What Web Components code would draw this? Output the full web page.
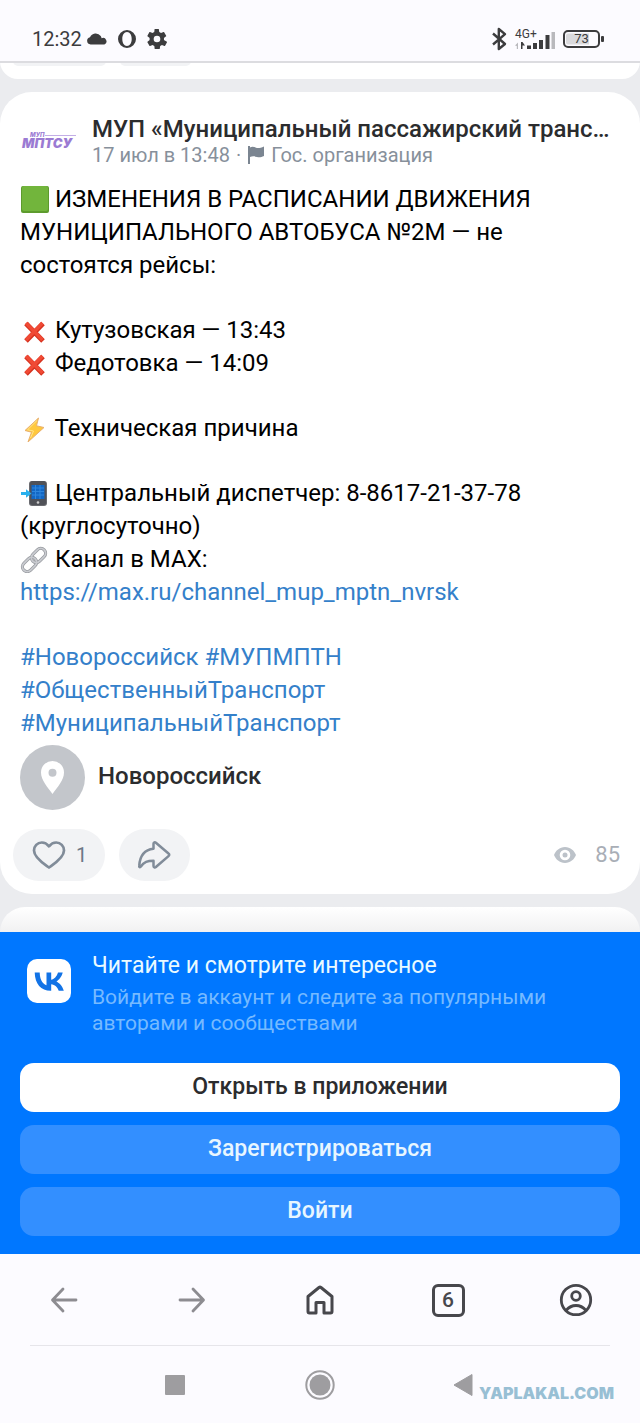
<!DOCTYPE html>
<html lang="ru">
<head>
<meta charset="utf-8">
<meta name="viewport" content="width=device-width, initial-scale=1">
<title>Запись сообщества</title>
<style>
  html { background: #fcfbff; }
  body { margin: 0; font-family: Roboto, "Noto Sans", sans-serif; color: #000; }
</style>
</head>
<body>
<phone-screen>
  <status-bar slot="top"></status-bar>
  <post-feed>
    <post-card>
      <span slot="author">МУП «Муниципальный пассажирский транс…</span>
      <span slot="date">17 июл в 13:48</span>
      <span slot="kind">Гос. организация</span>
    </post-card>
  </post-feed>
  <login-banner></login-banner>
  <browser-bar></browser-bar>
  <system-bar></system-bar>
</phone-screen>

<script>
const define = (name, html) => {
  const template = document.createElement('template');
  template.innerHTML = html;
  customElements.define(name, class extends HTMLElement {
    constructor() {
      super();
      this.attachShadow({ mode: 'open' }).append(template.content.cloneNode(true));
    }
  });
};

define('phone-screen', `
<style>
  :host { display: flex; flex-direction: column; background: #fcfbff; }
</style>
<slot name="top"></slot><slot></slot>`);

define('status-bar', `
<style>
  :host { display: flex; align-items: flex-end; justify-content: space-between; height: 61px;
    padding: 0 36px 0 32px; box-sizing: border-box; background: #fcfbff; color: #3c3c3e;
    box-shadow: 0 2px 0 #dcdce0; position: relative; z-index: 1; }
  .side { display: flex; align-items: center; height: 20px; margin-bottom: 12px; }
  .left { gap: 10px; }
  .left time { font-size: 20px; line-height: 20px; margin-right: -5px; }
  .right { gap: 8px; }
  .net { position: relative; display: block; width: 40px; height: 22px; }
  .net span { position: absolute; left: 0; top: 0; font-size: 12px; line-height: 12px; }
  .bat { position: relative; width: 41px; height: 20px; }
  .bat span { position: absolute; left: 0; top: 0; width: 37px; text-align: center; font-size: 13px; line-height: 20px; }
  svg { display: block; }
</style>
<div class="side left">
  <time>12:32</time>
  <svg width="20" height="20" viewBox="0 0 20 20"><path fill="#3c3c3e" d="M3.6 15.500a3.700 3.700 0 0 1-.6-7.300A6.200 6.200 0 0 1 13.700 7c.4.7.7 1.300.9 2.200a3.200 3.200 0 0 1 2.800 6.300z"/></svg>
  <svg width="20" height="20" viewBox="0 0 20 20"><path fill="#3c3c3e" fill-rule="evenodd" d="M10 1a9 9 0 1 0 0 18 9 9 0 0 0 0-18zm0 2c2.900 0 4.700 3.200 4.700 7s-1.800 7-4.700 7-4.700-3.200-4.700-7S7.100 3 10 3z"/></svg>
  <svg width="20" height="20" viewBox="0 0 24 24"><path fill="#3c3c3e" d="M20.300 13.200c.1-.4.1-.8.1-1.200s0-.8-.1-1.200l2.600-2c.2-.2.300-.5.100-.8l-2.400-4.200c-.2-.3-.5-.4-.8-.3l-3 1.200c-.6-.5-1.300-.9-2.100-1.200l-.5-3.200c0-.3-.3-.5-.6-.5H9.700c-.3 0-.6.2-.6.5l-.4 3.200c-.8.3-1.500.7-2.100 1.200l-3-1.200c-.3-.1-.6 0-.8.3L.500 8c-.2.300-.1.600.1.800l2.600 2c-.1.400-.1.800-.1 1.200s0 .8.100 1.200l-2.600 2c-.2.200-.3.500-.1.800l2.400 4.200c.2.300.5.400.8.300l3-1.200c.6.500 1.300.9 2.100 1.200l.4 3.200c0 .3.300.5.600.5h4.900c.3 0 .6-.2.600-.5l.5-3.200c.8-.3 1.500-.7 2.100-1.200l3 1.200c.3.100.6 0 .8-.3L24 16c.2-.3.100-.6-.1-.8zM12 16a4 4 0 1 1 0-8 4 4 0 0 1 0 8z"/></svg>
</div>
<div class="side right">
  <svg width="16" height="24" viewBox="0 0 16 24"><path d="M2 6.500 14 17l-6.200 5V2L14 7.200 2 17.500" fill="none" stroke="#3c3c3e" stroke-width="2.400" stroke-linejoin="round"/></svg>
  <div class="net"><span>4G+</span>
    <svg width="40" height="22" viewBox="0 0 40 22"><g fill="#3c3c3e"><path d="M12 17.500h4V21h-4zM18 15h4v6h-4zM24 12h4v9h-4zM30.500 7h4v14h-4z"/><path d="M6 14h1.500l2.500 3.500H7.500V21H6z"/></g><path fill="#b9b9bd" d="M36.500 4h3.500v17h-3.500zM0 17.500l3-3V21H1.800v-3z"/></svg>
  </div>
  <div class="bat">
    <svg width="41" height="20" viewBox="0 0 41 20"><rect x="1" y="2" width="35" height="16" rx="4" fill="#fcfbff" stroke="#3c3c3e" stroke-width="2"/><path d="M5 4.500h21v11H5a2 2 0 0 1-2-2v-7a2 2 0 0 1 2-2z" fill="#dadadd"/><rect x="38" y="7" width="3" height="6" rx="1" fill="#3c3c3e"/></svg>
    <span>73</span>
  </div>
</div>`);

define('post-feed', `
<style>
  :host { display: flex; flex-direction: column; gap: 13px; background: #ebecef; overflow: hidden; }
  .prev, .next { background: #fff; }
  .prev { height: 18px; border-radius: 0 0 32px 32px; display: flex; gap: 14px; padding-left: 13px; }
  .prev i { height: 5px; width: 93px; border-radius: 0 0 26px 26px; background: #f2f3f5; }
  .prev i + i { width: 71px; }
  .next { height: 25px; border-radius: 32px 32px 0 0; background: linear-gradient(#fff, #f1f1f2); }
</style>
<div class="prev"><i></i><i></i></div>
<slot></slot>
<div class="next"></div>`);

define('emoji-icon', `
<style>
  :host { display: inline-block; width: 29px; height: 28px; vertical-align: -6px; }
  svg { display: none; }
  :host([kind=square]) .square, :host([kind=cross]) .cross, :host([kind=bolt]) .bolt,
  :host([kind=phone]) .phone, :host([kind=link]) .link { display: block; }
</style>
<svg class="square" width="29" height="28" viewBox="0 0 29 28"><rect x="1" y="1" width="28" height="27" rx="2" fill="#5d9b2d"/><rect x="2" y="1" width="26" height="25" rx="2" fill="#72b53c"/></svg>
<svg class="cross" width="28" height="28" viewBox="0 0 28 28"><path d="M6 7.500 23 25M23 7.500 6 25" stroke="#d6321f" stroke-width="5"/><path d="M6 7 22.500 24M22.500 7 6 24" stroke="#f04a35" stroke-width="3.500"/></svg>
<svg class="bolt" width="28" height="28" viewBox="0 0 28 28"><path d="M18.500 4 5 16.500l6.500 1.700L8 28l16-14.500-7.500-1.700z" fill="#ffc83d" stroke="#e8b070" stroke-width="1" stroke-linejoin="round"/><path d="m17 6.500-9.500 9.300 6 1.200-3 7" fill="none" stroke="#ffe48c" stroke-width="1"/></svg>
<svg class="phone" width="28" height="28" viewBox="0 0 28 28"><rect x="9" y="2" width="18" height="25" rx="3" fill="#6a6b70"/><rect x="10" y="2" width="16" height="24" rx="2.500" fill="#505258"/><path d="M11.500 6h13v14h-13z" fill="#1267c4"/><path d="M12 9h12M12 12.500h12M12 16h12M15.500 6v14M20 6v14" stroke="#2f86dc" stroke-width="1"/><circle cx="18" cy="23.500" r="1.300" fill="#ccc"/><path d="M1 13h5v-2.800l5.500 4.300L6 18.800V16H1z" fill="#28b0ed"/></svg>
<svg class="link" width="28" height="28" viewBox="0 0 28 28"><g fill="none"><g stroke="#96999e" stroke-width="3.200"><rect x="-8" y="-4.800" width="16" height="9.600" rx="4.800" transform="translate(9.500 19.500) rotate(-45)"/><rect x="-8" y="-4.800" width="16" height="9.600" rx="4.800" transform="translate(18.500 10.500) rotate(-45)"/></g><g stroke="#c9cbd0" stroke-width="1.800"><rect x="-8" y="-4.800" width="16" height="9.600" rx="4.800" transform="translate(9.500 19.500) rotate(-45)"/><rect x="-8" y="-4.800" width="16" height="9.600" rx="4.800" transform="translate(18.500 10.500) rotate(-45)"/></g></g></svg>`);

define('post-card', `
<style>
  :host { display: block; background: #fff; border-radius: 32px; padding: 23px 20px 13px; }
  svg { display: block; }
  header { display: flex; gap: 14px; align-items: center; height: 52px; }
  .avatar { flex: none; width: 58px; font-family: Inter, sans-serif; font-style: italic; }
  .who { min-width: 0; flex: 1; }
  h2 { margin: 0; font-size: 24px; line-height: 28px; font-weight: 500; color: #2b2c2e;
    white-space: nowrap; overflow: hidden; text-overflow: ellipsis; }
  .meta { display: flex; align-items: center; gap: 6px; font-size: 20px; line-height: 24px; color: #87909b; }
  .text { padding-top: 16px; display: flex; flex-direction: column; gap: 32px; font-size: 24px; line-height: 33px; }
  p { margin: 0; }
  a { color: #3480ca; text-decoration: none; }
  .place { display: flex; align-items: center; gap: 13px; margin-top: 5px; font-size: 24px; line-height: 28px; font-weight: 500; color: #2b2c2e; }
  .place span { padding-bottom: 4px; }
  footer { display: flex; align-items: center; gap: 14px; margin: 19px 0 0 -7px; }
  button { display: flex; align-items: center; justify-content: center; gap: 9px; height: 52px; padding: 0 18px;
    border: 0; border-radius: 26px; background: #f2f3f5; color: #6d7885; font: 400 20px/24px Roboto, sans-serif; }
  .views { margin-left: auto; display: flex; align-items: center; gap: 18px; font-size: 22px; line-height: 28px; color: #a9aeb6; }
</style>
<header>
  <svg class="avatar" width="58" height="58" viewBox="0 0 58 58"><text x="2" y="36" font-size="13" font-weight="900" fill="#9b7bd3">МПТСУ</text><text x="10" y="25" font-size="6" font-weight="800" fill="#9b7bd3">МУП</text><path d="M25 23.500h31" stroke="#c3aee6"/></svg>
  <div class="who">
    <h2><slot name="author"></slot></h2>
    <div class="meta"><slot name="date"></slot><span>·</span>
      <svg width="18" height="20" viewBox="0 0 18 20"><path fill="#7b8591" d="M1 1h2v1.500c3-2 5.500.5 8 .5 2 0 3.500-.5 6-1.500v9.500c-3 1.500-5 1.500-7 1-2.500-.7-4.500-1-7 0v7H1z"/></svg>
      <slot name="kind"></slot></div>
  </div>
</header>
<div class="text">
  <p><emoji-icon kind="square"></emoji-icon> ИЗМЕНЕНИЯ В РАСПИСАНИИ ДВИЖЕНИЯ МУНИЦИПАЛЬНОГО АВТОБУСА №2М — не состоятся рейсы:</p>
  <p><emoji-icon kind="cross"></emoji-icon> Кутузовская — 13:43<br><emoji-icon kind="cross"></emoji-icon> Федотовка — 14:09</p>
  <p><emoji-icon kind="bolt"></emoji-icon> Техническая причина</p>
  <p><emoji-icon kind="phone"></emoji-icon> Центральный диспетчер: 8-8617-21-37-78 (круглосуточно)<br><emoji-icon kind="link"></emoji-icon> Канал в MAX:<br><a href="#max">https://max.ru/channel_mup_mptn_nvrsk</a></p>
  <p><a href="#n">#Новороссийск</a> <a href="#m">#МУПМПТН</a><br><a href="#o">#ОбщественныйТранспорт</a><br><a href="#t">#МуниципальныйТранспорт</a></p>
</div>
<div class="place">
  <svg width="65" height="65" viewBox="0 0 65 65"><circle cx="32.500" cy="32.500" r="32.500" fill="#c3c6cb"/><path fill="#fff" fill-rule="evenodd" d="M32.500 16A11.500 11.500 0 0 0 21 27.500c0 8 7 15 11.500 21.500C37 42.500 44 35.500 44 27.500A11.500 11.500 0 0 0 32.500 16zm0 7.700a4 4 0 1 1 0 8 4 4 0 0 1 0-8z"/></svg>
  <span>Новороссийск</span>
</div>
<footer>
  <button aria-label="Нравится"><svg width="36" height="32" viewBox="0 0 36 32"><path d="M18 28.500C14 25.500 3 19 3 11.500A7.800 7.800 0 0 1 10.800 3.500c3 0 5.200 1.300 7.200 3.800 2-2.500 4.200-3.800 7.200-3.800A7.800 7.800 0 0 1 33 11.500c0 7.500-11 14-15 17z" fill="none" stroke="#818c99" stroke-width="2.700" stroke-linejoin="round"/></svg><span>1</span></button>
  <button aria-label="Поделиться"><svg width="35" height="32" viewBox="0 0 35 32"><path d="M16.500 9.800V4.800c0-1.500 1.400-1.900 2.400-1.100L31.500 14.500c1 .8 1 1.800 0 2.600L18.900 28c-1 .8-2.400.4-2.400-1.100v-5.200c-6 0-9.500 1-12.800 6-1.200 1.200-1.600.3-1.500-.8.600-9 5-16.100 14.300-17.100z" fill="none" stroke="#818c99" stroke-width="2.500" stroke-linejoin="round"/></svg></button>
  <div class="views"><svg width="24" height="18" viewBox="0 0 24 18"><path fill="#bcc2c9" fill-rule="evenodd" d="M12 1C6.500 1 2.700 4.700 1 9c1.700 4.300 5.500 8 11 8s9.300-3.700 11-8C21.300 4.700 17.500 1 12 1zm0 2.700a5.300 5.300 0 1 0 0 10.600 5.300 5.300 0 0 0 0-10.600z"/><circle cx="12" cy="9" r="2.500" fill="#bcc2c9"/></svg><span>85</span></div>
</footer>`);

define('login-banner', `
<style>
  :host { display: flex; flex-direction: column; gap: 13px; padding: 20px 20px 18px; background: #07f; color: #fff; }
  .intro { display: flex; gap: 21px; padding: 0 7px; margin-bottom: 14px; }
  .intro svg { flex: none; margin-top: 7px; }
  h3 { margin: 0 0 4px; font-size: 23px; line-height: 28px; font-weight: 400; color: #eafaff; }
  p { margin: 0; font-size: 21px; line-height: 26px; color: #76baff; }
  button { height: 49px; border: 0; border-radius: 14px; background: #338fff; color: #e8f6ff; padding: 0 0 2px; font: 500 23px/28px Roboto, sans-serif; }
  button.main { background: #fff; color: #2b2c2e; }
</style>
<div class="intro">
  <svg width="44" height="44" viewBox="0 0 44 44"><rect width="44" height="44" rx="10" fill="#fff"/><path fill="#1273e6" d="M23.700 31.800C13.900 31.800 8 25 7.700 13.500h5c.2 8.400 3.900 12 6.800 12.700V13.500h4.700v7.300c2.800-.3 5.800-3.600 6.800-7.300h4.700c-.8 4.300-4 7.600-6.300 9 2.300 1.100 6 4 7.400 9.300h-5.100c-1.100-3.500-3.900-6.100-7.500-6.500v6.500z"/></svg>
  <div><h3>Читайте и смотрите интересное</h3><p>Войдите в аккаунт и следите за популярными авторами и сообществами</p></div>
</div>
<button class="main">Открыть в приложении</button>
<button>Зарегистрироваться</button>
<button>Войти</button>`);

define('browser-bar', `
<style>
  :host { display: flex; align-items: center; justify-content: space-around; height: 92px; position: relative; }
  :host::after { content: ""; position: absolute; left: 30px; right: 30px; bottom: 0; height: 1px; background: #e6e5ea; }
  button { flex: 1; display: flex; justify-content: center; align-items: center; padding: 0; border: 0; background: none; color: #47474c; }
  .tabs span { box-sizing: border-box; width: 33px; height: 33px; border: 3px solid #47474c; border-radius: 6px; font: 500 21px/27px Roboto, sans-serif; text-align: center; }
</style>
<button aria-label="Назад"><svg width="28" height="28" viewBox="0 0 28 28"><path d="M26 14H3M13 3 2.500 14 13 25" fill="none" stroke="#8d8c91" stroke-width="2.800" stroke-linecap="round" stroke-linejoin="round"/></svg></button>
<button aria-label="Вперёд"><svg width="28" height="28" viewBox="0 0 28 28"><path d="M2 14h23M15 3l10.500 11L15 25" fill="none" stroke="#8d8c91" stroke-width="2.800" stroke-linecap="round" stroke-linejoin="round"/></svg></button>
<button aria-label="Домой"><svg width="30" height="32" viewBox="0 0 30 32"><path d="M3 12.500v15c0 1.100.4 1.500 1.500 1.500H11V18.500h8V29h6.500c1.100 0 1.500-.4 1.500-1.500v-15L16 3.500c-.7-.5-1.300-.5-2 0z" fill="none" stroke="#47474c" stroke-width="3" stroke-linejoin="round"/></svg></button>
<button class="tabs" aria-label="Вкладки"><span>6</span></button>
<button aria-label="Профиль"><svg width="34" height="34" viewBox="0 0 34 34"><g fill="none" stroke="#47474c" stroke-width="2.800"><circle cx="17" cy="17" r="14.700"/><circle cx="17" cy="13" r="4.300"/><path d="M7 27.500c3-3.500 6-5 10-5s7 1.500 10 5"/></g></svg></button>`);

define('system-bar', `
<style>
  :host { display: flex; align-items: center; justify-content: center; gap: 115px; height: 77px; position: relative; }
  button { display: flex; padding: 0; border: 0; background: none; }
  .mark { position: absolute; right: 26px; bottom: 20px; font: 900 16px/20px Inter, sans-serif; color: #98bfd4; }
</style>
<button aria-label="Недавние"><svg width="30" height="30" viewBox="0 0 30 30"><rect x="5" y="5" width="20" height="20" rx="1" fill="#9e9da0"/></svg></button>
<button aria-label="Главный экран"><svg width="30" height="30" viewBox="0 0 30 30"><circle cx="15" cy="15" r="13.700" fill="none" stroke="#9e9da0" stroke-width="2"/><circle cx="15" cy="15" r="10.500" fill="#9e9da0"/></svg></button>
<button aria-label="Назад"><svg width="30" height="30" viewBox="0 0 30 30"><path d="M4 15 22 4.500v21z" fill="#9e9da0" stroke="#9e9da0" stroke-linejoin="round"/></svg></button>
<span class="mark">YAPLAKAL.COM</span>`);
</script>
</body>
</html>
